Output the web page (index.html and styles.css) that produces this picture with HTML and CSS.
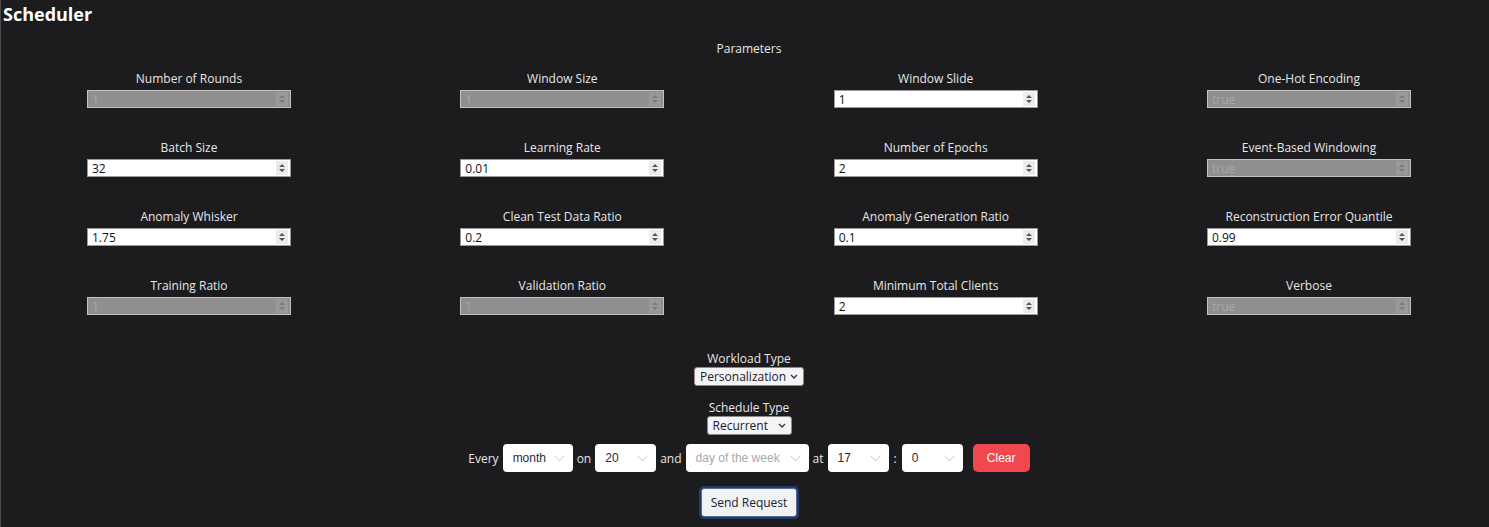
FILE: index.html
```html
<!DOCTYPE html>
<html lang="en">
<head>
<meta charset="utf-8">
<title>Scheduler</title>
<link rel="stylesheet" href="styles.css">
</head>
<body>
<div class="page">
  <h1 class="title">Scheduler</h1>
  <div class="section">
    <div class="heading">Parameters</div>
    <div class="grid">
      <div class="cell"><label class="label">Number of Rounds</label><div class="box off"><input class="val" value="1" disabled><span class="spin"><svg width="8" height="10" viewBox="0 0 8 10"><path d="M4 1 L7 4 H1 Z M4 9 L7 6 H1 Z"/></svg></span></div></div>
      <div class="cell"><label class="label">Window Size</label><div class="box off"><input class="val" value="1" disabled><span class="spin"><svg width="8" height="10" viewBox="0 0 8 10"><path d="M4 1 L7 4 H1 Z M4 9 L7 6 H1 Z"/></svg></span></div></div>
      <div class="cell"><label class="label">Window Slide</label><div class="box"><input class="val" value="1"><span class="spin"><svg width="8" height="10" viewBox="0 0 8 10"><path d="M4 1 L7 4 H1 Z M4 9 L7 6 H1 Z"/></svg></span></div></div>
      <div class="cell"><label class="label">One-Hot Encoding</label><div class="box off"><input class="val" value="true" disabled><span class="spin"><svg width="8" height="10" viewBox="0 0 8 10"><path d="M4 1 L7 4 H1 Z M4 9 L7 6 H1 Z"/></svg></span></div></div>

      <div class="cell"><label class="label">Batch Size</label><div class="box"><input class="val" value="32"><span class="spin"><svg width="8" height="10" viewBox="0 0 8 10"><path d="M4 1 L7 4 H1 Z M4 9 L7 6 H1 Z"/></svg></span></div></div>
      <div class="cell"><label class="label">Learning Rate</label><div class="box"><input class="val" value="0.01"><span class="spin"><svg width="8" height="10" viewBox="0 0 8 10"><path d="M4 1 L7 4 H1 Z M4 9 L7 6 H1 Z"/></svg></span></div></div>
      <div class="cell"><label class="label">Number of Epochs</label><div class="box"><input class="val" value="2"><span class="spin"><svg width="8" height="10" viewBox="0 0 8 10"><path d="M4 1 L7 4 H1 Z M4 9 L7 6 H1 Z"/></svg></span></div></div>
      <div class="cell"><label class="label">Event-Based Windowing</label><div class="box off"><input class="val" value="true" disabled><span class="spin"><svg width="8" height="10" viewBox="0 0 8 10"><path d="M4 1 L7 4 H1 Z M4 9 L7 6 H1 Z"/></svg></span></div></div>

      <div class="cell"><label class="label">Anomaly Whisker</label><div class="box"><input class="val" value="1.75"><span class="spin"><svg width="8" height="10" viewBox="0 0 8 10"><path d="M4 1 L7 4 H1 Z M4 9 L7 6 H1 Z"/></svg></span></div></div>
      <div class="cell"><label class="label">Clean Test Data Ratio</label><div class="box"><input class="val" value="0.2"><span class="spin"><svg width="8" height="10" viewBox="0 0 8 10"><path d="M4 1 L7 4 H1 Z M4 9 L7 6 H1 Z"/></svg></span></div></div>
      <div class="cell"><label class="label">Anomaly Generation Ratio</label><div class="box"><input class="val" value="0.1"><span class="spin"><svg width="8" height="10" viewBox="0 0 8 10"><path d="M4 1 L7 4 H1 Z M4 9 L7 6 H1 Z"/></svg></span></div></div>
      <div class="cell"><label class="label">Reconstruction Error Quantile</label><div class="box"><input class="val" value="0.99"><span class="spin"><svg width="8" height="10" viewBox="0 0 8 10"><path d="M4 1 L7 4 H1 Z M4 9 L7 6 H1 Z"/></svg></span></div></div>

      <div class="cell"><label class="label">Training Ratio</label><div class="box off"><input class="val" value="1" disabled><span class="spin"><svg width="8" height="10" viewBox="0 0 8 10"><path d="M4 1 L7 4 H1 Z M4 9 L7 6 H1 Z"/></svg></span></div></div>
      <div class="cell"><label class="label">Validation Ratio</label><div class="box off"><input class="val" value="1" disabled><span class="spin"><svg width="8" height="10" viewBox="0 0 8 10"><path d="M4 1 L7 4 H1 Z M4 9 L7 6 H1 Z"/></svg></span></div></div>
      <div class="cell"><label class="label">Minimum Total Clients</label><div class="box"><input class="val" value="2"><span class="spin"><svg width="8" height="10" viewBox="0 0 8 10"><path d="M4 1 L7 4 H1 Z M4 9 L7 6 H1 Z"/></svg></span></div></div>
      <div class="cell"><label class="label">Verbose</label><div class="box off"><input class="val" value="true" disabled><span class="spin"><svg width="8" height="10" viewBox="0 0 8 10"><path d="M4 1 L7 4 H1 Z M4 9 L7 6 H1 Z"/></svg></span></div></div>
    </div>

    <div class="stack">
      <label class="label">Workload Type</label>
      <div class="nsel wide"><span>Personalization</span><svg width="8" height="5" viewBox="0 0 8 5"><path d="M1 1 L4 4 L7 1" fill="none" stroke="#333" stroke-width="1.3"/></svg></div>
      <label class="label second">Schedule Type</label>
      <div class="nsel narrow"><span>Recurrent</span><svg width="8" height="5" viewBox="0 0 8 5"><path d="M1 1 L4 4 L7 1" fill="none" stroke="#333" stroke-width="1.3"/></svg></div>
    </div>

    <div class="sched">
      <span class="word">Every</span>
      <div class="dd w70"><span>month</span><svg width="11" height="7" viewBox="0 0 11 7"><path d="M0.5 0.5 L5.5 6 L10.5 0.5" fill="none" stroke="#c8c8c8" stroke-width="1"/></svg></div>
      <span class="word">on</span>
      <div class="dd w61"><span>20</span><svg width="11" height="7" viewBox="0 0 11 7"><path d="M0.5 0.5 L5.5 6 L10.5 0.5" fill="none" stroke="#c8c8c8" stroke-width="1"/></svg></div>
      <span class="word">and</span>
      <div class="dd w123 ph"><span>day of the week</span><svg width="11" height="7" viewBox="0 0 11 7"><path d="M0.5 0.5 L5.5 6 L10.5 0.5" fill="none" stroke="#c8c8c8" stroke-width="1"/></svg></div>
      <span class="word">at</span>
      <div class="dd w61"><span>17</span><svg width="11" height="7" viewBox="0 0 11 7"><path d="M0.5 0.5 L5.5 6 L10.5 0.5" fill="none" stroke="#c8c8c8" stroke-width="1"/></svg></div>
      <span class="word colon">:</span>
      <div class="dd w61"><span>0</span><svg width="11" height="7" viewBox="0 0 11 7"><path d="M0.5 0.5 L5.5 6 L10.5 0.5" fill="none" stroke="#c8c8c8" stroke-width="1"/></svg></div>
      <button class="clear" type="button">Clear</button>
    </div>

    <div class="send-row">
      <button class="send" type="button">Send Request</button>
    </div>
  </div>
</div>
</body>
</html>
```

FILE: styles.css
```css
html, body {
  margin: 0;
  padding: 0;
  background: #1c1c1e;
}
body {
  height: 527px;
  overflow: hidden;
  font-family: "Open Sans", "Noto Sans", sans-serif;
  color: #e6e6e6;
}
.page {
  border-left: 1px solid #4a4a4c;
  height: 527px;
  box-sizing: border-box;
}
.title {
  margin: 0;
  padding: 3px 0 0 2px;
  font-size: 18px;
  line-height: 22px;
  font-weight: 700;
  color: #ffffff;
}
.section {
  margin-left: 8px;
  width: 1480px;
}
.heading {
  margin-top: 16px;
  text-align: center;
  font-size: 12px;
  line-height: 16px;
}
.grid {
  margin-top: 14px;
  display: grid;
  grid-template-columns: repeat(4, 360px);
  column-gap: 13.33px;
  row-gap: 32px;
}
.cell {
  display: flex;
  flex-direction: column;
  align-items: center;
}
.label {
  display: block;
  font-size: 12px;
  line-height: 16px;
  color: #e6e6e6;
  text-align: center;
}
.cell .label {
  margin-bottom: 3px;
}
.box {
  display: flex;
  align-items: center;
  width: 204px;
  height: 18px;
  box-sizing: border-box;
  border: 1px solid #9a9a9a;
  background: #ffffff;
}
.val {
  flex: 1;
  min-width: 0;
  border: 0;
  outline: none;
  background: transparent;
  padding: 0 0 0 4px;
  height: 16px;
  font-family: "Open Sans", "Noto Sans", sans-serif;
  font-size: 12px;
  color: #111111;
}
.spin {
  width: 12px;
  height: 14px;
  margin-right: 2px;
  display: flex;
  align-items: center;
  justify-content: center;
  background: #ececec;
}
.spin svg path {
  fill: #555555;
}
.box.off {
  background: #8f8f8f;
  border-color: #c2c2c2;
}
.box.off .val {
  color: #a9a9a9;
}
.box.off .spin {
  background: #999999;
}
.box.off .spin svg path {
  fill: #7a7a7a;
}
.stack {
  margin-top: 36px;
  display: flex;
  flex-direction: column;
  align-items: center;
}
.stack .second {
  margin-top: 14px;
}
.nsel {
  display: flex;
  align-items: center;
  justify-content: space-between;
  box-sizing: border-box;
  height: 19px;
  padding: 0 5px 0 5px;
  background: #f4f4f6;
  border: 1px solid #8a8a8a;
  border-radius: 3px;
  font-size: 12px;
  color: #1a1a2a;
}
.nsel.wide { width: 110px; }
.nsel.narrow { width: 85px; }
.sched {
  margin-top: 9px;
  display: flex;
  justify-content: center;
  align-items: center;
  gap: 4px;
  font-family: "Liberation Sans", Arial, sans-serif;
  font-size: 12px;
}
.word {
  color: #e6e6e6;
  font-family: "Open Sans", "Noto Sans", sans-serif;
  font-size: 12px;
}
.colon { padding: 0 1px; }
.dd {
  display: flex;
  align-items: center;
  justify-content: space-between;
  box-sizing: border-box;
  height: 28px;
  padding: 0 8px 0 10px;
  background: #ffffff;
  border-radius: 4px;
  color: #2a2a3a;
}
.dd.ph { color: #a8a8a8; }
.w70 { width: 70px; }
.w61 { width: 61px; }
.w123 { width: 123px; padding-left: 10px; }
.clear {
  margin-left: 6px;
  width: 57px;
  height: 28px;
  border: 0;
  border-radius: 5px;
  background: #f0484e;
  color: #ffffff;
  font-family: "Liberation Sans", Arial, sans-serif;
  font-size: 12px;
}
.send-row {
  margin-top: 16px;
  display: flex;
  justify-content: center;
}
.send {
  width: 96px;
  height: 29px;
  box-sizing: border-box;
  border: 1px solid #5a6a88;
  border-radius: 3px;
  outline: 2px solid #1f3b70;
  outline-offset: 0;
  background: #f1f2f4;
  color: #1b2232;
  font-family: "Open Sans", "Noto Sans", sans-serif;
  font-size: 12px;
}
```
